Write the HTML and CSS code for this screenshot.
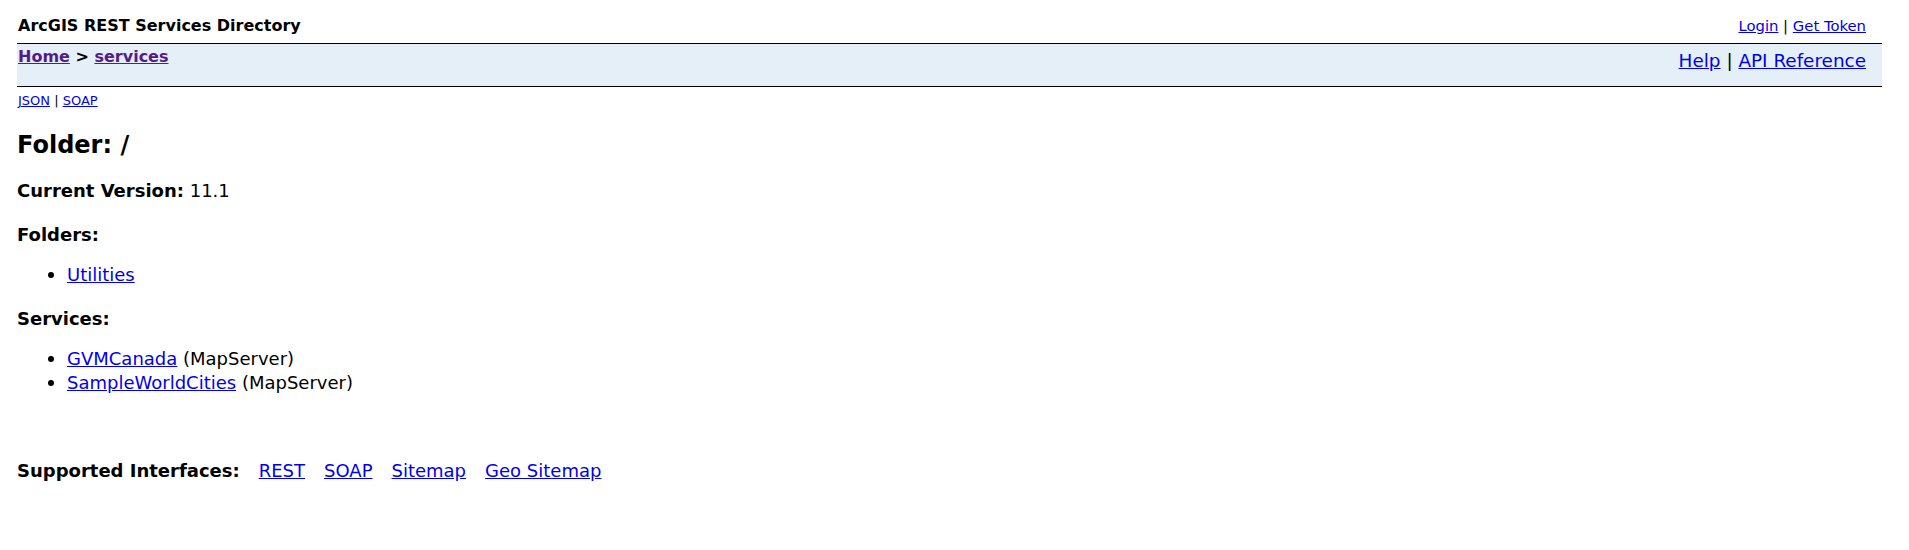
FILE: index.html
```html
<!DOCTYPE html>
<html>
<head>
<meta charset="utf-8">
<title>Folder: /</title>
<link rel="stylesheet" href="styles.css">
</head>
<body>
<div class="page">
  <div class="top-row">
    <div class="title">ArcGIS REST Services Directory</div>
    <div class="user-links"><a href="#">Login</a> | <a href="#">Get Token</a></div>
  </div>
  <div class="nav">
    <div class="crumbs"><a class="visited" href="#">Home</a> &gt; <a class="visited" href="#">services</a></div>
    <div class="help"><a href="#">Help</a> | <a href="#">API Reference</a></div>
  </div>
</div>
<div class="formats"><a href="#">JSON</a> | <a href="#">SOAP</a></div>
<div class="content">
  <h2 class="folder-title">Folder: /</h2>
  <div class="version"><b>Current Version:</b> 11.1</div>
  <div class="section-title">Folders:</div>
  <ul class="list">
    <li><a href="#">Utilities</a></li>
  </ul>
  <div class="section-title">Services:</div>
  <ul class="list">
    <li><a href="#">GVMCanada</a> (MapServer)</li>
    <li><a href="#">SampleWorldCities</a> (MapServer)</li>
  </ul>
  <div class="interfaces">
    <b>Supported Interfaces:</b>
    <a href="#">REST</a>
    <a href="#">SOAP</a>
    <a href="#">Sitemap</a>
    <a href="#">Geo Sitemap</a>
  </div>
</div>
</body>
</html>
```

FILE: styles.css
```css
html, body {
  margin: 0;
  padding: 0;
  background: #ffffff;
  color: #000000;
  font-family: "DejaVu Sans", Verdana, sans-serif;
  font-size: 18px;
}

a {
  color: #0000ee;
  text-decoration: underline;
}

a.visited {
  color: #551a8b;
}

.page {
  margin: 0 27px 0 17px;
}

.top-row {
  height: 43px;
  display: flex;
  justify-content: space-between;
  align-items: flex-start;
}

.title {
  font-size: 16px;
  line-height: 20px;
  font-weight: bold;
  padding: 16px 0 0 1px;
}

.user-links {
  font-size: 14.8px;
  line-height: 18px;
  padding: 17px 16px 0 0;
}

.nav {
  height: 42px;
  border-top: 1px solid #000000;
  border-bottom: 1px solid #000000;
  background: #e5eff7;
  display: flex;
  justify-content: space-between;
  align-items: flex-start;
}

.crumbs {
  font-size: 16px;
  font-weight: bold;
  line-height: 23px;
  padding: 1px 0 0 1px;
}

.help {
  font-size: 18.4px;
  line-height: 22px;
  padding: 6px 16px 0 0;
}

.formats {
  font-size: 13px;
  line-height: 15px;
  padding: 6px 0 1px 18px;
}

.content {
  padding-left: 17px;
}

.folder-title {
  margin: 22px 0 0 0;
  font-size: 24px;
  line-height: 29px;
  font-weight: bold;
}

.version {
  margin-top: 20px;
  line-height: 22px;
}

.section-title {
  font-weight: bold;
  line-height: 22px;
  margin-top: 22px;
}

.list {
  list-style: none;
  margin: 17px 0 0 0;
  padding: 0;
}

.list li {
  line-height: 24px;
}

.list li::before {
  content: "";
  display: inline-block;
  width: 6px;
  height: 6px;
  border-radius: 50%;
  background: #000000;
  margin: 0 13px 0 31px;
  vertical-align: 3px;
}

.list + .section-title {
  margin-top: 21px;
}

.interfaces {
  margin-top: 65px;
  line-height: 22px;
  display: flex;
  align-items: baseline;
  gap: 19px;
}
```
